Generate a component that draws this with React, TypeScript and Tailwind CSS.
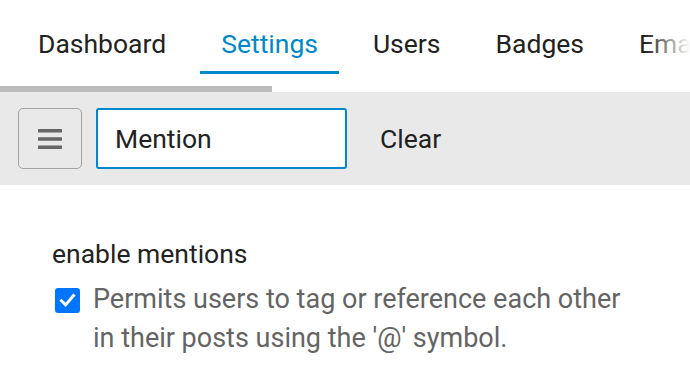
const tabs = ["Dashboard", "Settings", "Users", "Badges", "Emails"];

function MenuIcon() {
  return (
    <svg width="24" height="22" viewBox="0 0 24 22" fill="#666">
      <rect x="0" y="1" width="24" height="3.5" rx="0.5" />
      <rect x="0" y="9.25" width="24" height="3.5" rx="0.5" />
      <rect x="0" y="17.5" width="24" height="3.5" rx="0.5" />
    </svg>
  );
}

function CheckBox() {
  return (
    <span className="flex h-[25px] w-[25px] shrink-0 items-center justify-center rounded-[3px] bg-[#0075ff]">
      <svg width="17" height="17" viewBox="0 0 17 17" fill="none">
        <path d="M2.5 8.8 L6.6 12.9 L14.5 3.6" stroke="#fff" strokeWidth="3" strokeLinecap="square" />
      </svg>
    </span>
  );
}

export default function App() {
  return (
    <div className="relative h-[383px] w-[690px] overflow-hidden bg-white font-['Roboto',sans-serif] text-[#222]">
      <nav className="relative flex gap-[13px] whitespace-nowrap pl-[17px]">
        {tabs.map((tab) => (
          <div
            key={tab}
            className={
              tab === "Settings"
                ? "border-b-[3px] border-[#0088cc] px-[21px] pt-[28px] pb-[12px] text-[26.5px] leading-[31px] text-[#0088cc]"
                : "border-b-[3px] border-transparent px-[21px] pt-[28px] pb-[12px] text-[26.5px] leading-[31px]"
            }
          >
            {tab}
          </div>
        ))}
        <div className="absolute top-0 right-0 h-[74px] w-[45px] bg-gradient-to-r from-white/0 to-white" />
      </nav>

      <div className="mt-[12px] h-[6px] w-[272px] bg-[#bbbbbb]" />

      <div className="flex h-[93px] items-center gap-[14px] bg-[#e9e9e9] px-[18px]">
        <button className="flex h-[61px] w-[64px] items-center justify-center rounded-[5px] border border-[#a3a3a3]">
          <MenuIcon />
        </button>
        <div className="flex h-[61px] w-[251px] items-center rounded-[3px] border-2 border-[#0088cc] bg-white pl-[17px] text-[26.5px]">
          Mention
        </div>
        <button className="px-[19px] text-[26.5px]">Clear</button>
      </div>

      <div className="pl-[52px] pt-[53px]">
        <h3 className="text-[26.5px] leading-[31px]">enable mentions</h3>
        <label className="mt-[11px] flex gap-[13px] pl-[3px]">
          <span className="pt-[8px]">
            <CheckBox />
          </span>
          <span className="w-[535px] text-[27px] leading-[39px] text-[#646464]">
            Permits users to tag or reference each other in their posts using the '@' symbol.
          </span>
        </label>
      </div>
    </div>
  );
}
